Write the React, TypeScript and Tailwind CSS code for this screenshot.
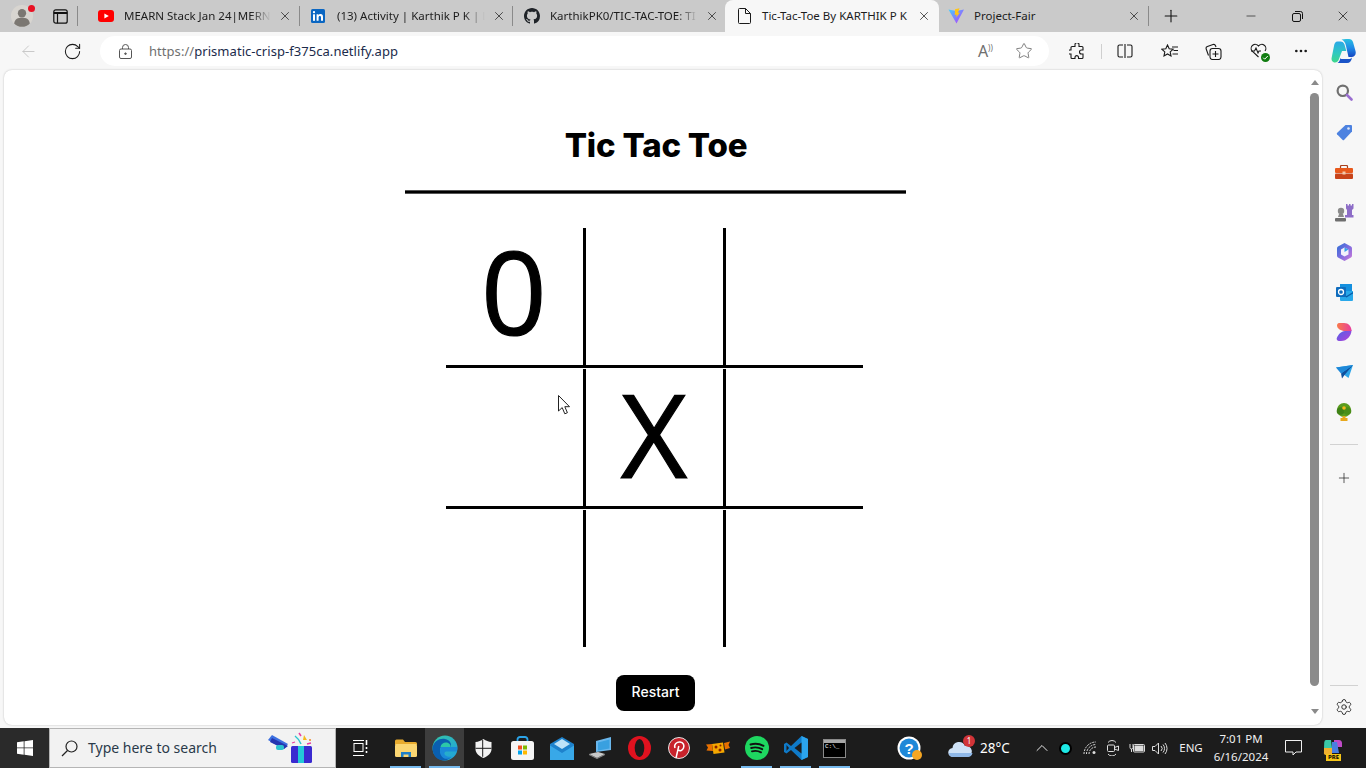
import React from "react";
import { ArrowLeft, RotateCw, Star, Plus, Minus, X, Settings, Ellipsis, ChevronUp } from "lucide-react";

const UI = "font-['Noto_Sans','Open_Sans',sans-serif]";

function Yt() {
  return (
    <svg width="16" height="12" viewBox="0 0 16 12"><rect width="16" height="12" rx="3" fill="#f00" /><path d="M6.4 3.4 10.8 6 6.4 8.6z" fill="#fff" /></svg>
  );
}
function Li() {
  return (
    <svg width="14" height="14" viewBox="0 0 14 14"><rect width="14" height="14" rx="1.5" fill="#0a66c2" /><rect x="2" y="5.3" width="2" height="6.5" fill="#fff" /><circle cx="3" cy="3.2" r="1.15" fill="#fff" /><path d="M5.6 5.3h1.9v.9c.4-.6 1.1-1.1 2.1-1.1 1.7 0 2.4 1 2.4 2.8v3.9h-2V8.4c0-.9-.3-1.5-1.1-1.5s-1.3.6-1.3 1.5v3.4h-2z" fill="#fff" /></svg>
  );
}
function Gh() {
  return (
    <svg width="16" height="16" viewBox="0 0 16 16" fill="#1f2328"><path d="M8 0C3.58 0 0 3.58 0 8c0 3.54 2.29 6.53 5.47 7.59.4.07.55-.17.55-.38 0-.19-.01-.82-.01-1.49-2.01.37-2.53-.49-2.69-.94-.09-.23-.48-.94-.82-1.13-.28-.15-.68-.52-.01-.53.63-.01 1.08.58 1.23.82.72 1.21 1.87.87 2.33.66.07-.52.28-.87.51-1.07-1.78-.2-3.64-.89-3.64-3.95 0-.87.31-1.59.82-2.15-.08-.2-.36-1.02.08-2.12 0 0 .67-.21 2.2.82.64-.18 1.32-.27 2-.27s1.36.09 2 .27c1.53-1.04 2.2-.82 2.2-.82.44 1.1.16 1.92.08 2.12.51.56.82 1.27.82 2.15 0 3.07-1.87 3.75-3.65 3.95.29.25.54.73.54 1.48 0 1.07-.01 1.93-.01 2.2 0 .21.15.46.55.38A8.01 8.01 0 0 0 16 8c0-4.42-3.58-8-8-8z" /></svg>
  );
}
function Doc() {
  return (
    <svg width="13" height="16" viewBox="0 0 13 16" fill="none" stroke="#1a1a1a" strokeWidth="1"><path d="M1.5.5h6l5 5v9a1 1 0 0 1-1 1h-10a1 1 0 0 1-1-1v-13a1 1 0 0 1 1-1z" /><path d="M7.5.5v5h5" /></svg>
  );
}
function Vite() {
  return (
    <svg width="17" height="16" viewBox="0 0 17 16"><defs><linearGradient id="vt" x1="0" y1="0" x2="1" y2="1"><stop offset="0" stopColor="#41d1ff" /><stop offset="1" stopColor="#bd34fe" /></linearGradient></defs><path d="M.5 1.5 8 3l8-1.5L8.5 15.500z" fill="url(#vt)" /><path d="M11.500.2 7 1.200 6.800 7l1.800-.4-.5 3L12 4.500l-2 .3z" fill="#ffc517" /></svg>
  );
}

function Tab({ icon, title, w, active, col, pl, closeW = "w-[28px]", fade = true }: { icon: React.ReactNode; title: string; w: string; active?: boolean; col: string; pl: string; closeW?: string; fade?: boolean }) {
  return (
    <div className={`${w} flex shrink-0 items-center ${active ? "h-8 rounded-t-lg bg-[#f7f7f7]" : "h-7"}`}>
      <div className={`flex ${col} ${pl} shrink-0 justify-start`}>{icon}</div>
      <div className={`w-[148px] whitespace-nowrap text-[11.5px] leading-4 text-[#1c1c1c] ${fade ? "[mask-image:linear-gradient(to_right,black_86%,transparent)]" : ""}`}>{title}</div>
      <div className={`ml-auto flex ${closeW} shrink-0 justify-center`}><X size={14} strokeWidth={1.3} color="#222" /></div>
    </div>
  );
}
function Sep() {
  return <div className="h-5 w-px shrink-0 bg-[#8a8a8a]" />;
}

function TitleBar() {
  return (
    <div className="flex h-8 items-end bg-[#cacaca]">
      <div className="flex h-8 w-[43px] shrink-0 items-center justify-center">
        <div className="relative">
          <svg width="24" height="24" viewBox="0 0 26 26"><circle cx="13" cy="13" r="12" fill="#d8d5d0" /><circle cx="13" cy="10" r="4.5" fill="#7b7772" /><path d="M4.5 21c1-5 4-6 8.500-6s7.500 1 8.500 6a11.500 11.500 0 0 1-17 0z" fill="#7b7772" /></svg>
          <span className="absolute right-[-1px] top-[1px] h-[7px] w-[7px] rounded-full bg-[#e81123]" />
        </div>
      </div>
      <div className="flex h-8 w-[34px] shrink-0 items-center justify-center">
        <svg width="15" height="15" viewBox="0 0 15 15" fill="none" stroke="#111" strokeWidth="1.2"><rect x=".8" y=".8" width="13.4" height="13.4" rx="2" /><path d="M.8 4h13.4" strokeWidth="2" /><path d="M4.500 4v10.200" /></svg>
      </div>
      <div className="flex h-8 w-[10px] shrink-0 items-center"><Sep /></div>
      <div className="flex h-8 w-[213px] shrink-0 items-center justify-between">
        <Tab icon={<Yt />} title="MEARN Stack Jan 24|MERN" w="w-[212px]" col="w-[37px]" pl="pl-[11px]" />
        <Sep />
      </div>
      <div className="flex h-8 w-[213px] shrink-0 items-center justify-between">
        <Tab icon={<Li />} title="(13) Activity | Karthik P K | Li" w="w-[212px]" col="w-[37px]" pl="pl-[11px]" />
        <Sep />
      </div>
      <div className="flex h-8 w-[212px] shrink-0 items-center">
        <Tab icon={<Gh />} title="KarthikPK0/TIC-TAC-TOE: TI" w="w-[212px]" col="w-[37px]" pl="pl-[11px]" closeW="w-[26px]" />
      </div>
      <Tab icon={<Doc />} title="Tic-Tac-Toe By KARTHIK P K" w="w-[214px]" col="w-[37px]" pl="pl-[13px]" closeW="w-[34px]" active fade={false} />
      <div className="flex h-8 w-[210px] shrink-0 items-center justify-between">
        <Tab icon={<Vite />} title="Project-Fair" w="w-[209px]" col="w-[35px]" pl="pl-[9px]" fade={false} />
        <Sep />
      </div>
      <div className="flex h-8 w-[44px] shrink-0 items-center justify-center"><Plus size={20} strokeWidth={1.3} color="#111" /></div>
      <div className="ml-auto flex h-8 items-center">
        <div className="flex w-[46px] justify-center"><Minus size={14} strokeWidth={1.1} color="#111" /></div>
        <div className="flex w-[46px] justify-center">
          <svg width="11" height="11" viewBox="0 0 11 11" fill="none" stroke="#111" strokeWidth="1"><rect x=".5" y="2.500" width="8" height="8" rx="1.500" /><path d="M3 .5h5.500A2 2 0 0 1 10.500 2.500V8" /></svg>
        </div>
        <div className="flex w-[46px] justify-center"><X size={16} strokeWidth={1.1} color="#111" /></div>
      </div>
    </div>
  );
}

function ToolIcon({ children, w = "w-[44px]", extra = "" }: { children: React.ReactNode; w?: string; extra?: string }) {
  return <div className={`flex ${w} ${extra} shrink-0 items-center justify-center`}>{children}</div>;
}

function Toolbar() {
  return (
    <div className="flex h-[38px] items-center bg-[#f7f7f7]">
      <div className="flex w-[50px] shrink-0 justify-center pl-[6px]"><ArrowLeft size={19} strokeWidth={1.1} color="#c2c2c2" /></div>
      <div className="flex w-[44px] shrink-0 justify-center"><RotateCw size={19} strokeWidth={1.3} color="#1a1a1a" /></div>
      <div className={`ml-[6px] flex h-[30px] w-[949px] shrink-0 items-center rounded-full bg-white ${UI}`}>
        <div className="ml-[19px] w-[30px] shrink-0">
          <svg width="13" height="15" viewBox="0 0 13 15" fill="none" stroke="#555" strokeWidth="1"><rect x=".5" y="5" width="12" height="9.500" rx="1.500" /><path d="M3.500 5V3.500a3 3 0 0 1 6 0V5" /><circle cx="6.500" cy="9.700" r=".8" fill="#555" /></svg>
        </div>
        <div className="text-[13px] leading-4 tracking-[0.05px] text-[#1b2b4b]"><span className="text-[#6f6f6f]">https://</span>prismatic-crisp-f375ca.netlify.app</div>
        <div className="ml-auto flex items-center">
          <div className="relative w-[40px] text-center text-[16px] leading-4 text-[#6f6f6f]">A<span className="absolute left-[25px] top-[-3px] text-[8px]">))</span></div>
          <div className="ml-[11px] mr-[15px] flex w-[20px] justify-center"><Star size={18} strokeWidth={1.1} color="#666" /></div>
        </div>
      </div>
      <ToolIcon w="w-[52px]" extra="pl-[4px]">
        <svg width="16" height="17" viewBox="0 0 16 17" fill="none" stroke="#1a1a1a" strokeWidth="1.1"><path d="M6 1.500a2 2 0 0 1 4 .3V3.500h3a1 1 0 0 1 1 1V7h-1.500a2 2 0 0 0 0 4H14v3.500a1 1 0 0 1-1 1H9.500V14a1.800 1.800 0 0 0-3.500 0v1.500H3a1 1 0 0 1-1-1V11H1a2 2 0 0 1 0-4h1V4.500a1 1 0 0 1 1-1h3z" /></svg>
      </ToolIcon>
      <div className="h-[15px] w-px shrink-0 bg-[#cfcfcf]" />
      <ToolIcon w="w-[46px]">
        <svg width="16" height="14" viewBox="0 0 16 14" fill="none" stroke="#1a1a1a" strokeWidth="1.1"><path d="M6 1H2.500A1.500 1.500 0 0 0 1 2.500v9A1.500 1.500 0 0 0 2.500 13H6" /><path d="M10 1h3.500A1.500 1.500 0 0 1 15 2.500v9a1.500 1.500 0 0 1-1.500 1.500H10" /><path d="M8 0v14" /></svg>
      </ToolIcon>
      <ToolIcon w="w-[43px]">
        <svg width="17" height="15" viewBox="0 0 17 15" fill="none" stroke="#1a1a1a" strokeWidth="1.1"><path d="m6.500 1 1.700 3.700 4 .5-3 2.700.8 4-3.500-2-3.500 2 .8-4-3-2.700 4-.5z" /><path d="M11 3h6M12.500 6.500H17M11.500 10H17" /></svg>
      </ToolIcon>
      <ToolIcon w="w-[45px]">
        <svg width="17" height="17" viewBox="0 0 17 17" fill="none" stroke="#1a1a1a" strokeWidth="1.1"><path d="M3.500 12.500 1.200 6A2 2 0 0 1 2.400 3.500L8 1.500a2 2 0 0 1 2.500 1.200l.5 1.300" /><rect x="5" y="5.500" width="11" height="11" rx="2.500" /><path d="M10.500 8v6M7.500 11h6" /></svg>
      </ToolIcon>
      <ToolIcon>
        <div className="relative">
          <svg width="17" height="16" viewBox="0 0 17 16" fill="none" stroke="#1a1a1a" strokeWidth="1.1"><path d="M8.500 14 2 8A3.800 3.800 0 0 1 8.500 3 3.800 3.800 0 0 1 15 8" /><path d="M1 8h3.500l1.500-3 2 5 1-2h2" /></svg>
          <span className="absolute bottom-[-3px] right-[-3px] flex h-[9px] w-[9px] items-center justify-center rounded-full bg-[#107c10]">
            <svg width="7" height="7" viewBox="0 0 7 7" fill="none" stroke="#fff" strokeWidth="1"><path d="m1.200 3.700 1.500 1.500L5.800 2" /></svg>
          </span>
        </div>
      </ToolIcon>
      <ToolIcon w="w-[42px]"><Ellipsis size={16} strokeWidth={2} color="#1a1a1a" /></ToolIcon>
      <ToolIcon w="w-[42px]">
        <svg width="25" height="24" viewBox="0 0 25 24"><defs><linearGradient id="cp1" x1="0" y1="0" x2="0" y2="1"><stop offset="0" stopColor="#2aa8e8" /><stop offset=".55" stopColor="#2fc8c0" /><stop offset="1" stopColor="#3fd88a" /></linearGradient><linearGradient id="cp2" x1="0" y1="0" x2="0" y2="1"><stop offset="0" stopColor="#28c0e0" /><stop offset=".5" stopColor="#1f8ae8" /><stop offset="1" stopColor="#1546c0" /></linearGradient></defs><path d="M15 0h3c2 0 3.300 1 4 3l2.500 9c1 3.500-1 6-4 6H17.500L15 7c-.6-3-2-5.500-4.500-6.500C12 .2 13.500 0 15 0z" fill="url(#cp2)" /><path d="M6.500 2.500h3c2 0 3.300 1 4 3l1.800 6.500H11L8 20c-.7 2-1.800 3.500-4 3.500C1.500 23.500 0 21 .7 18.500L3 7c.5-2.800 1.500-4.500 3.500-4.500z" fill="url(#cp1)" /><path d="M8 24h8c3 0 4.500-2 5-5.500-1 1-2 1.500-3.500 1.500H11c-1 0-1.500-.3-1.700-1C9 21 8.500 22.800 6.500 24z" fill="#1a54c8" /></svg>
      </ToolIcon>
    </div>
  );
}

function SideIcon({ children }: { children: React.ReactNode }) {
  return <div className="flex h-10 items-center justify-center">{children}</div>;
}

function Sidebar() {
  return (
    <div className="flex w-[44px] shrink-0 flex-col bg-[#f7f7f7] pt-[2px]">
      <SideIcon><svg width="17" height="17" viewBox="0 0 17 17" fill="none"><circle cx="6.800" cy="6.800" r="5.200" stroke="#707070" strokeWidth="2.200" /><path d="m11 11 4.500 4.500" stroke="#9a6ed0" strokeWidth="2.600" strokeLinecap="round" /></svg></SideIcon>
      <SideIcon><svg width="17" height="17" viewBox="0 0 17 17"><path d="M9.500 1H15a1 1 0 0 1 1 1v5.500L8 16a1 1 0 0 1-1.300 0L1 10.300a1 1 0 0 1 0-1.300z" fill="#4d82e0" /><circle cx="12.500" cy="4.500" r="1.300" fill="#dfe7f7" /></svg></SideIcon>
      <SideIcon><svg width="18" height="14" viewBox="0 0 18 14"><path d="M5.500 3V1.500A1 1 0 0 1 6.500.5h5a1 1 0 0 1 1 1V3" fill="none" stroke="#a8401c" strokeWidth="1.200" /><rect y="3" width="18" height="5" rx="1" fill="#e8591c" /><rect y="8.500" width="18" height="5.500" rx="1" fill="#c8441a" /><rect x="7.500" y="6.500" width="3" height="3" fill="#f5c9a8" /></svg></SideIcon>
      <SideIcon><svg width="19" height="19" viewBox="0 0 19 19"><circle cx="6" cy="8" r="3.200" fill="#8a8a8a" /><path d="M4 11h4l1 3H3z" fill="#8a8a8a" /><rect x="0" y="15" width="11" height="3.500" rx="1" fill="#6e6e6e" /><path d="M11 1h1.500v1.500H14V1h1.500v1.500H17V1h1.500v4.500L17 7v5h1.500v2.500H10V12h2V7l-1-1.500z" fill="#8d6dc7" /></svg></SideIcon>
      <SideIcon><svg width="17" height="18" viewBox="0 0 17 18"><defs><linearGradient id="m1" x1="0" y1="0" x2="1" y2="1"><stop offset="0" stopColor="#2b6fd4" /><stop offset=".5" stopColor="#7c6ce0" /><stop offset="1" stopColor="#d27ad8" /></linearGradient></defs><path d="M8.500 0 15 3.500q1 .5 1 2v7q0 1.500-1 2L8.500 18 2 14.500q-1-.5-1-2v-7q0-1.500 1-2z" fill="url(#m1)" /><path d="M5 6.500 8.500 4.500 12.500 6.500v5l-4 2-3.500-2z" fill="#f3f1fb" /><path d="M8.500 4.500 12.500 6.500 8.500 9z" fill="#37a0e8" /></svg></SideIcon>
      <SideIcon><svg width="17" height="17" viewBox="0 0 17 17"><rect x="4" y="0" width="12" height="8" fill="#1490df" /><path d="M4 7h13v9a1 1 0 0 1-1 1H5a1 1 0 0 1-1-1z" fill="#28a8ea" /><path d="m4 8 6.500 4L17 8v1.500l-6.500 4L4 9.500z" fill="#0a5da8" /><rect x="0" y="3" width="10" height="10" rx="1" fill="#0f6cbd" /><circle cx="5" cy="8" r="2.500" fill="none" stroke="#fff" strokeWidth="1.300" /></svg></SideIcon>
      <SideIcon><svg width="16" height="18" viewBox="0 0 16 18"><defs><linearGradient id="d1" x1="0" y1="0" x2="1" y2="0"><stop offset="0" stopColor="#f97a4a" /><stop offset="1" stopColor="#e83e9c" /></linearGradient><linearGradient id="d2" x1="0" y1="0" x2="1" y2="1"><stop offset="0" stopColor="#4a63e8" /><stop offset="1" stopColor="#b83ed8" /></linearGradient></defs><path d="M15.500 7C15.500 13 11 18 5 18H3.500C1.500 18 0 16.500 1 14.500 2.200 12 5 8 9 8z" fill="url(#d2)" /><path d="M3 0h5c4.500 0 7.500 3.500 7.500 8H9C5 8 1 5.500 1 2.500 1 1 2 0 3 0z" fill="url(#d1)" /></svg></SideIcon>
      <SideIcon><svg width="17" height="14" viewBox="0 0 17 14"><path d="M0 2.500 17 0 12.500 13 7 9z" fill="#2ba4e8" /><path d="M17 0 5 8.500 6 13.500 8.500 10z" fill="#0f4f9c" /><path d="M0 2.500 5 8.500 17 0z" fill="#1e88d8" /></svg></SideIcon>
      <SideIcon><svg width="16" height="18" viewBox="0 0 16 18"><circle cx="8" cy="7" r="7" fill="#5a9c1e" /><circle cx="4.500" cy="8" r="3.800" fill="#3f8216" /><circle cx="11.500" cy="8" r="3.800" fill="#4a8e18" /><circle cx="8" cy="5" r="1.800" fill="#f5b81c" /><path d="M6.500 13h3v2h2v3h-7v-3h2z" fill="#e8a81c" /></svg></SideIcon>
      <div className="mx-[8px] mt-[12px] h-px bg-[#d2d2d2]" />
      <div className="flex h-[65px] items-center justify-center"><Plus size={16} strokeWidth={1.1} color="#222" /></div>
      <div className="flex-1" />
      <div className="mx-[8px] h-px bg-[#d2d2d2]" />
      <div className="flex h-[42px] items-start justify-center pt-[12px]"><Settings size={18} strokeWidth={1.2} color="#222" /></div>
    </div>
  );
}

function Cell({ v, last, bottom, pb = "" }: { v?: string; last?: boolean; bottom?: boolean; pb?: string }) {
  return (
    <div className={`flex items-center justify-center border-black text-[115px] leading-none text-black [-webkit-text-stroke:1.2px_black] font-['Open_Sans',sans-serif] ${pb} ${last ? "w-[137px]" : "w-[140px] border-r-[3px]"} ${bottom ? "h-[137px]" : "h-[140px] border-b-[3px]"}`}>
      {v}
    </div>
  );
}

function Page() {
  return (
    <div className="relative flex h-[655px] flex-1 overflow-hidden rounded-lg bg-white shadow-[0_0_2px_rgba(0,0,0,0.25)]">
      <div className="flex flex-1 flex-col items-center pt-[54px]">
        <h1 className="mr-[1px] h-[42px] text-[33px] font-extrabold leading-[42px] tracking-[-0.2px] text-black font-['Inter',sans-serif]">Tic Tac Toe</h1>
        <div className="mr-[2px] mt-[24px] h-[4px] w-[501px] border-y border-[#555] bg-black" />
        <div className="ml-[-5px] mt-[34px] flex w-[417px] flex-col gap-px">
          <div className="flex"><Cell v="0" pb="pb-[12px]" /><Cell /><Cell last /></div>
          <div className="flex"><Cell /><Cell v="X" pb="pb-[8px]" /><Cell last /></div>
          <div className="flex"><Cell bottom /><Cell bottom /><Cell bottom last /></div>
        </div>
        <button className="mr-[2px] mt-[28px] h-9 w-[79px] rounded-lg bg-black pb-[3px] text-[14px] font-medium text-white font-['Inter',sans-serif]">Restart</button>
      </div>
      <div className="flex w-[13px] shrink-0 flex-col items-start pl-px">
        <div className="ml-[1px] mt-[10px] h-0 w-0 border-x-[4px] border-b-[5px] border-x-transparent border-b-[#8a8a8a]" />
        <div className="mt-[8px] h-[593px] w-[9px] rounded-full bg-[#8b8b8b]" />
        <div className="ml-[1px] mt-[23px] h-0 w-0 border-x-[4px] border-t-[5px] border-x-transparent border-t-[#8a8a8a]" />
      </div>
      <svg className="absolute left-[554px] top-[325px]" width="13" height="20" viewBox="0 0 13 20"><path d="M.5.5v15.500l3.700-3.400 2.600 6.200 2.600-1.100-2.600-6h4.700z" fill="#fff" stroke="#222" strokeWidth="1" /></svg>
    </div>
  );
}

function TB({ children, w = "w-[39px]", active, under }: { children: React.ReactNode; w?: string; active?: boolean; under?: boolean }) {
  return (
    <div className={`relative flex h-10 ${w} shrink-0 items-center justify-center ${active ? "bg-[#3d3d3d]" : ""}`}>
      {children}
      {under && <span className="absolute bottom-0 left-[4px] right-[4px] h-[2px] bg-[#76b9ed]" />}
    </div>
  );
}

function Taskbar() {
  return (
    <div className={`flex h-10 items-center bg-[#1c1c1c] text-white ${UI}`}>
      <div className="flex h-10 w-[49px] shrink-0 items-center justify-center bg-[#2a2a2a]">
        <svg width="16" height="16" viewBox="0 0 16 16" fill="#fff"><path d="M0 2.300 6.700 1.300v6.200H0zM7.500 1.200 16 0v7.500H7.500zM0 8.300h6.700v6.400L0 13.700zM7.500 8.300H16V16l-8.500-1.200z" /></svg>
      </div>
      <div className="flex h-10 w-[287px] shrink-0 items-center border border-[#b5b5b5] bg-[#f2f2f2]">
        <svg className="ml-[11px]" width="17" height="17" viewBox="0 0 17 17" fill="none" stroke="#222" strokeWidth="1.200"><circle cx="10.500" cy="6.500" r="5.500" /><path d="M6.500 10.500 1 16" /></svg>
        <span className="ml-[10px] text-[14px] leading-5 text-[#2a3a4a]">Type here to search</span>
        <svg className="ml-auto mr-[22px]" width="46" height="32" viewBox="0 0 46 32"><path d="M1 8 5 3l16 9-4 5z" fill="#3b6fe0" /><path d="M3 10 5 6l16 8-4 3z" fill="#2436b0" /><rect x="9" y="13" width="8" height="5" rx="2" fill="#2cc4d0" /><rect x="24" y="14" width="21" height="17" rx="1.500" fill="#3a2ad0" /><rect x="31" y="14" width="6" height="17" fill="#23c8d8" /><path d="M28 4q4 3 6 8" stroke="#2cc4d0" strokeWidth="1.500" fill="none" /><path d="M32 1l2 3" stroke="#e83ea0" strokeWidth="1.500" /><path d="M37 3l3 5h-4z" fill="#f5b81c" /><circle cx="43" cy="8" r="1" fill="#f08020" /><path d="M25 11l3-1M40 12l4-1" stroke="#e83ea0" strokeWidth="1.300" /></svg>
      </div>
      <div className="w-[5px] shrink-0" />
      <TB><svg width="16" height="16" viewBox="0 0 16 16" fill="none" stroke="#fff" strokeWidth="1"><path d="M0 .5h11M0 15.500h11" /><rect x="1" y="3.500" width="9" height="8" /><path d="M13.500 0v5M13.500 7v2M13.500 11v2" strokeWidth="1.600" /></svg></TB>
      <div className="w-[6px] shrink-0" />
      <TB under><svg width="22" height="18" viewBox="0 0 22 18"><path d="M0 2a1.500 1.500 0 0 1 1.500-1.500H8L10 3h10.500A1.500 1.500 0 0 1 22 4.500V6H0z" fill="#e8ab2e" /><rect y="5" width="22" height="13" rx="1.500" fill="#fbd672" /><path d="M6 13h10v5h-2.500v-2.500h-5V18H6z" fill="#1e7fc8" /></svg></TB>
      <TB active under><svg width="26" height="26" viewBox="0 0 26 26"><defs><linearGradient id="e1" x1="0" y1="0" x2="1" y2="1"><stop offset="0" stopColor="#35c6a5" /><stop offset="1" stopColor="#1fa0e0" /></linearGradient></defs><circle cx="13" cy="13" r="12.500" fill="url(#e1)" /><path d="M.5 13C1.500 6 8 3 13 4c5 .8 7 5 5.500 8H9c-2 2-1 7 2.500 9.500 2 1.500 5 1.500 7.500.5-2 2-4 3.500-7 3.500C5 25.500.5 20 .5 13z" fill="#0a5fb0" /><path d="M8.500 12c.5-3.500 3.500-5 6.500-4.500 2.500.5 3.800 2.500 3.500 4.500z" fill="#2cc8a8" /><path d="M9 12h16c.5 2 0 3.500-.3 4.500H15c-2.500 0-3.500 2-1.500 4 1.500 1.200 4 1.500 6.500 1-2.500 2.500-6 3-8.500 1.500C8 20.500 7 16 9 12z" fill="#1a8ad8" /></svg></TB>
      <TB><svg width="17" height="19" viewBox="0 0 17 19"><path d="M8.500 0c2.500 1.800 5 2.700 8 3v7c0 4-3 7-8 9-5-2-8-5-8-9V3c3-.3 5.500-1.200 8-3z" fill="#f2f2f2" /><path d="M7.700 1v16.800M.5 9.300h16" stroke="#1c1c1c" strokeWidth="1" /></svg></TB>
      <TB><svg width="23" height="24" viewBox="0 0 23 24"><path d="M6.500 6V3.500A2.500 2.500 0 0 1 9 1h5a2.500 2.500 0 0 1 2.500 2.500V6" fill="none" stroke="#2ba4e8" strokeWidth="1.800" /><rect y="5" width="23" height="19" rx="2.500" fill="#f5f5f5" /><rect x="7" y="9.500" width="4" height="4" fill="#f25022" /><rect x="12" y="9.500" width="4" height="4" fill="#7fba00" /><rect x="7" y="14.500" width="4" height="4" fill="#00a4ef" /><rect x="12" y="14.500" width="4" height="4" fill="#ffb900" /></svg></TB>
      <TB><svg width="24" height="23" viewBox="0 0 24 23"><path d="M0 7 12 0l12 7v16H0z" fill="#1e82cc" /><path d="M0 8.500 12 16 24 8.500V23H0z" fill="#38a8e8" /><path d="M4 7 12 2l8 5-8 5z" fill="#bfe3f8" /></svg></TB>
      <TB><svg width="24" height="22" viewBox="0 0 24 22"><path d="M7 4 22 0v13L7 15z" fill="#6ab7ec" /><path d="M9 5.500 20.500 2.500v9L9 13.500z" fill="#39a0e0" /><path d="M0 17l9-2 7 2-8 4z" fill="#c8c8c8" /><path d="M0 17v1l8 4 8-4v-1l-8 4z" fill="#8e8e8e" /></svg></TB>
      <TB><svg width="23" height="24" viewBox="0 0 23 24"><ellipse cx="11.500" cy="12" rx="11.500" ry="12" fill="#e0121f" /><ellipse cx="11.500" cy="12" rx="4.800" ry="9" fill="#1c1c1c" /></svg></TB>
      <TB><svg width="22" height="22" viewBox="0 0 22 22"><circle cx="11" cy="11" r="10.500" fill="#c8232c" stroke="#e6e6e6" strokeWidth="1" /><path d="M8 21l2.800-12M7 11C5.500 7 9 4.800 12 5c3.500.3 4.500 3.500 3.500 6s-3.500 3.500-5 2" fill="none" stroke="#fff" strokeWidth="1.500" /></svg></TB>
      <TB><svg width="24" height="14" viewBox="0 0 24 14"><path d="M6 3 17 1.500l1.500 10L7.500 13z" fill="#f5a800" /><path d="M6 3 0 3.500l2 3-1.500 3L7 10zM18 2l6-1.500-1.500 3.500 1.500 3-5 1.500z" fill="#e87000" /><circle cx="10" cy="6" r="1.500" fill="#8a2000" /><circle cx="14" cy="9" r="1.500" fill="#8a2000" /><circle cx="14.500" cy="4.500" r="1" fill="#8a2000" /></svg></TB>
      <TB under><svg width="24" height="24" viewBox="0 0 24 24"><circle cx="12" cy="12" r="12" fill="#1ed760" /><path d="M5.500 8.500c4.500-1.200 9-.8 13 1.300M6.200 12c3.700-1 7.700-.6 11 1.200M7 15.300c3-.8 6.200-.5 9 1" fill="none" stroke="#111" strokeWidth="1.900" strokeLinecap="round" /></svg></TB>
      <TB under><svg width="24" height="24" viewBox="0 0 24 24"><path d="M17.500 0 24 3v18l-6.500 3L7 14l-4.500 3.500L0 16v-8l2.500-1.500L7 10z" fill="#0f7ac8" /><path d="m17.500 0 6.500 3v18l-6.500 3z" fill="#2ba4ee" /><path d="M17.500 6.500 10.500 12l7 5.500z" fill="#1c1c1c" /><path d="M2.500 9v6L5 12z" fill="#1c1c1c" /></svg></TB>
      <TB under><div className="flex h-[19px] w-[23px] flex-col border border-[#8a8a8a] bg-black"><div className="h-[3px] bg-[#a8a8a8]" /><div className="pl-px font-['Liberation_Mono',monospace] text-[6px] leading-[8px] text-white">C:\_</div></div></TB>
      <div className="w-[35px] shrink-0" />
      <div className="relative flex h-10 w-[39px] shrink-0 items-center justify-center">
        <svg width="24" height="24" viewBox="0 0 24 24"><circle cx="12" cy="12" r="11.500" fill="#fff" /><circle cx="12" cy="12" r="9.500" fill="#1e88d8" /><text x="12" y="17.500" textAnchor="middle" fontSize="15" fontWeight="700" fill="#fff" fontFamily="Liberation Sans, sans-serif">?</text></svg>
        <span className="absolute bottom-[8px] right-[6px] h-[10px] w-[10px] rounded-full bg-[#f5a623]" />
      </div>
      <div className="w-[17px] shrink-0" />
      <div className="relative flex h-10 w-[30px] shrink-0 items-center justify-center">
        <svg width="25" height="20" viewBox="0 0 25 20"><path d="M5 19a4.500 4.500 0 0 1-.5-9A6.500 6.500 0 0 1 17 8a5.500 5.500 0 0 1 2.500 11z" fill="#cfe2f7" /><path d="M1 15a4 4 0 0 0 4 4h14.500a5 5 0 0 0 5-4z" fill="#8fb8e8" /></svg>
        <span className="absolute right-[0px] top-[7px] flex h-[12px] w-[12px] items-center justify-center rounded-full bg-[#d13438] text-[8px] leading-none text-white">1</span>
      </div>
      <div className="ml-[5px] w-[35px] shrink-0 text-[13.5px] leading-5">28°C</div>
      <div className="flex w-[38px] shrink-0 justify-center pl-[16px]"><ChevronUp size={20} strokeWidth={1.2} color="#e8e8e8" /></div>
      <div className="flex w-[24px] shrink-0 justify-center"><span className="h-[13px] w-[13px] rounded-full border-[2px] border-black bg-[#1de9e6]" /></div>
      <div className="flex w-[25px] shrink-0 justify-center">
        <svg width="14" height="14" viewBox="0 0 14 14" fill="none" stroke="#ddd" strokeWidth="1"><path d="M1 13A12 12 0 0 1 13 1M3.500 13A9.500 9.500 0 0 1 13 3.500M6 13a7 7 0 0 1 7-7" strokeDasharray="2 1" /><circle cx="11" cy="11.500" r="1.500" fill="#ddd" stroke="none" /></svg>
      </div>
      <div className="flex w-[22px] shrink-0 justify-center">
        <svg width="12" height="16" viewBox="0 0 12 16" fill="none" stroke="#ddd" strokeWidth="1"><rect x=".5" y="5" width="7" height="6.500" rx="1" /><path d="m7.500 7.500 4-1.500v4.500l-4-1.500M1 2.500A5 5 0 0 1 9 2.500M1 14a5 5 0 0 0 8 0" /></svg>
      </div>
      <div className="flex w-[25px] shrink-0 justify-center">
        <svg width="16" height="10" viewBox="0 0 16 10"><rect x="4.500" y="1.500" width="11" height="7.500" rx="1" fill="none" stroke="#ddd" /><rect x="5.500" y="2.500" width="9" height="5.500" fill="#ddd" /><path d="M1 1v3.500a1.500 1.500 0 0 0 3 0V1M2.500 6v3" stroke="#ddd" fill="none" strokeWidth="1" /></svg>
      </div>
      <div className="flex w-[22px] shrink-0 justify-center">
        <svg width="16" height="13" viewBox="0 0 16 13" fill="none" stroke="#ddd" strokeWidth="1"><path d="M.5 4.500h2.500L6.500 1v11L3 8.500H.5zM9 4a3.500 3.500 0 0 1 0 5M11 2.500a6 6 0 0 1 0 8M13 1a8.500 8.500 0 0 1 0 11" /></svg>
      </div>
      <div className="w-[40px] shrink-0 text-center text-[11.5px] leading-4 text-[#f0f0f0]">ENG</div>
      <div className="w-[60px] shrink-0 text-center text-[11.5px] leading-[18px] text-[#f0f0f0]"><div>7:01 PM</div><div>6/16/2024</div></div>
      <div className="ml-[4px] flex w-[36px] shrink-0 justify-center">
        <svg width="17" height="16" viewBox="0 0 17 16" fill="none" stroke="#f0f0f0" strokeWidth="1"><path d="M.5.5h16v11.500H11L8 15v-3H.5z" /></svg>
      </div>
      <div className="relative ml-[3px] flex w-[37px] shrink-0 justify-center">
        <svg width="20" height="18" viewBox="0 0 20 18"><path d="M3 1h5l1 8H1l.2-5C1.300 2 2 1 3 1z" fill="#3ac8a8" /><path d="M11 1h5c2 0 3 1.500 3 3v4h-8z" fill="#c04ac8" /><path d="M1 9h8v7H3c-1.500 0-2.500-1-2-3z" fill="#f0b030" /><path d="M9 3h5l2 11H9z" fill="#4a7fe0" /></svg>
        <span className="absolute bottom-[-4px] left-[12px] bg-[#f5c518] px-[2px] text-[6px] font-bold leading-[7px] text-black">PRE</span>
      </div>
    </div>
  );
}

export default function App() {
  return (
    <div className={`flex h-[768px] w-[1366px] flex-col overflow-hidden bg-[#f7f7f7] ${UI}`}>
      <TitleBar />
      <Toolbar />
      <div className="flex h-[658px] pl-1">
        <div className="flex flex-1 flex-col"><Page /><div className="h-[3px]" /></div>
        <Sidebar />
      </div>
      <Taskbar />
    </div>
  );
}
